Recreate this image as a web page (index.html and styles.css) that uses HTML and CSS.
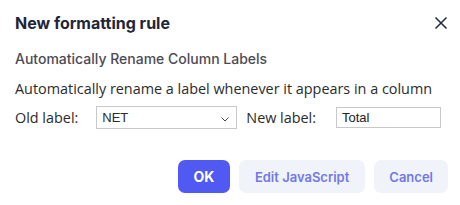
FILE: index.html
```html
<!DOCTYPE html>
<html lang="en">
<head>
    <meta charset="UTF-8">
    <title>New formatting rule</title>
    <link rel="stylesheet" href="styles.css">
</head>
<body>
    <div class="dialog">
        <div class="dialog-header">
            <h1>New formatting rule</h1>
            <button class="close" aria-label="Close">
                <svg width="14" height="14" viewBox="0 0 14 14">
                    <path d="M1.5 1.5 L12.5 12.5 M12.5 1.5 L1.5 12.5" stroke="#1e2a3c" stroke-width="1.5" fill="none"/>
                </svg>
            </button>
        </div>
        <h2>Automatically Rename Column Labels</h2>

        <!-- corpo da regra -->
        <div class="rule">
            <p>Automatically rename a label whenever it appears in a column</p>
            <div class="row">
                <label>Old label:</label>
                <div class="select">
                    <span>NET</span>
                    <svg width="8" height="5" viewBox="0 0 8 5">
                        <path d="M0.5 0.5 L4 4 L7.5 0.5" stroke="#444" stroke-width="1" fill="none"/>
                    </svg>
                </div>
                <label class="new">New label:</label>
                <input type="text" value="Total">
            </div>
        </div>

        <div class="buttons">
            <button class="btn primary">OK</button>
            <button class="btn">Edit JavaScript</button>
            <button class="btn cancel">Cancel</button>
        </div>
    </div>
</body>
</html>
```

FILE: styles.css
```css
/* Estilos Gerais */
body {
    margin: 0;
    background: white;
}

.dialog {
    padding: 11px 12px 0 15px;
    font-family: Inter, sans-serif;
}

.dialog-header {
    display: flex;
    justify-content: space-between;
    align-items: center;
}

.dialog-header h1 {
    margin: 0;
    font-size: 16px;
    font-weight: 700;
    color: #1e2638;
    line-height: 24px;
}

.close {
    border: none;
    background: none;
    padding: 0;
    width: 14px;
    height: 14px;
    display: flex;
}

h2 {
    margin: 15px 0 0;
    font-size: 14px;
    font-weight: 500;
    color: #4b4b55;
    line-height: 18px;
}

.rule {
    font-family: "Open Sans", sans-serif;
    color: #2b2b2b;
    font-size: 14.4px;
}

.rule p {
    margin: 11px 0 0;
    line-height: 20px;
}

.row {
    display: flex;
    align-items: center;
    margin-top: 7px;
}

.row label {
    margin-right: 18px;
}

.row label.new {
    margin-left: 1px;
    margin-right: 20px;
}

.select {
    width: 141px;
    height: 23px;
    box-sizing: border-box;
    border: 1px solid #c8c8c8;
    display: flex;
    justify-content: space-between;
    align-items: center;
    padding: 0 7px 0 5px;
    margin-right: 8px;
    font-family: "Liberation Sans", Arial, sans-serif;
    font-size: 13px;
}

.select svg {
    margin-top: 3px;
}

input {
    width: 105px;
    height: 21px;
    box-sizing: border-box;
    border: 1px solid #c8c8c8;
    padding: 0 5px;
    font-family: "Liberation Sans", Arial, sans-serif;
    font-size: 13px;
    color: #222;
    outline: none;
}

.buttons {
    display: flex;
    justify-content: flex-end;
    gap: 9px;
    margin-top: 31px;
}

.btn {
    border: none;
    border-radius: 7px;
    height: 33px;
    padding: 0 16px;
    background-color: #f0f3f9;
    color: #7278e8;
    font-family: Inter, sans-serif;
    font-weight: 600;
    font-size: 13px;
}

.btn.cancel {
    padding: 0 15px;
}

.btn.primary {
    background-color: #5059f2;
    color: white;
    font-size: 14px;
    font-weight: 700;
    width: 52px;
    padding: 0;
}
```
